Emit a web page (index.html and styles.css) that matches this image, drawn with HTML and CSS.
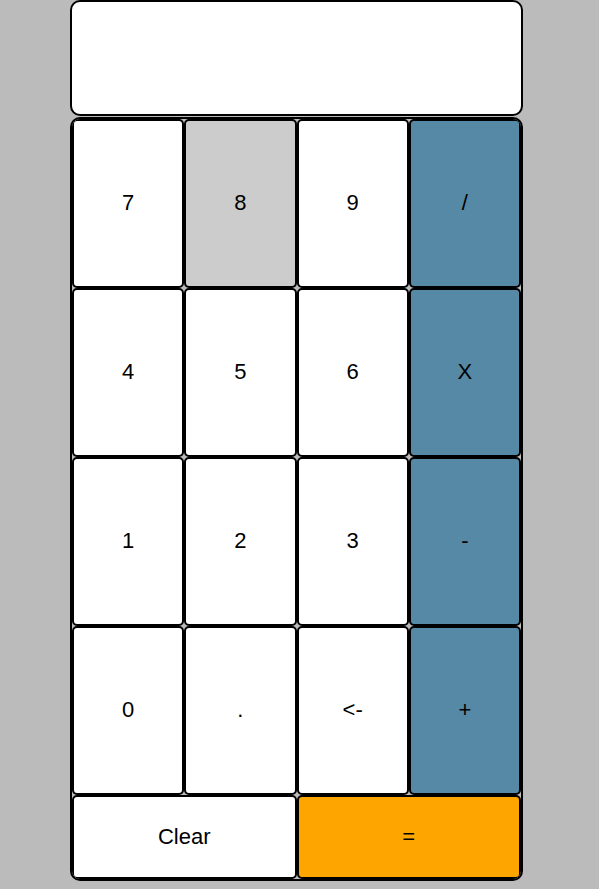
FILE: index.html
```html
<!DOCTYPE html>
<html lang="en">
<head>
    <meta charset="UTF-8">
    <meta name="viewport" content="width=device-width, initial-scale=1.0">
    <title>Calculator</title>
    <link rel="stylesheet" href="styles.css">
</head>
<body>
    <div class="calculator">
        <div id="display" class="display"></div>

        <div class="keys">
            <button class="key">7</button>
            <button class="key key-active">8</button>
            <button class="key">9</button>
            <button class="key key-op">/</button>

            <button class="key">4</button>
            <button class="key">5</button>
            <button class="key">6</button>
            <button class="key key-op">X</button>

            <button class="key">1</button>
            <button class="key">2</button>
            <button class="key">3</button>
            <button class="key key-op">-</button>

            <button class="key">0</button>
            <button class="key">.</button>
            <button class="key">&lt;-</button>
            <button class="key key-op">+</button>

            <button class="key key-wide">Clear</button>
            <button class="key key-wide key-equals">=</button>
        </div>
    </div>
</body>
</html>
```

FILE: styles.css
```css
:root {
    --background-color: #BBBBBB;
    --white: #FFFFFF;
    --border-color: #000000;
    --op-color: #5589A5;
    --equals-color: #FFA500;
    --active-color: #CCCCCC;
}

* {
    margin: 0;
    padding: 0;
    box-sizing: border-box;
}

body {
    font-family: 'Liberation Sans', Arial, sans-serif;
    background-color: var(--background-color);
}

.calculator {
    width: 453px;
    margin-left: 70px;
}

.display {
    height: 116px;
    background-color: var(--white);
    border: 2px solid var(--border-color);
    border-radius: 10px;
    margin-bottom: 1px;
}

.keys {
    display: grid;
    grid-template-columns: repeat(4, 1fr);
    grid-template-rows: repeat(4, 169px) 84px;
    border: 2px solid var(--border-color);
    border-radius: 10px;
    overflow: hidden;
}

.key {
    background-color: var(--white);
    border: 2px solid var(--border-color);
    border-radius: 5px;
    font-family: inherit;
    font-size: 22px;
    line-height: 1;
    padding-bottom: 1px;
    color: #000000;
    cursor: pointer;
}

.key:hover,
.key-active {
    background-color: var(--active-color);
}

.key-op {
    background-color: var(--op-color);
}

.key-wide {
    grid-column: span 2;
}

.key-equals {
    background-color: var(--equals-color);
}
```
